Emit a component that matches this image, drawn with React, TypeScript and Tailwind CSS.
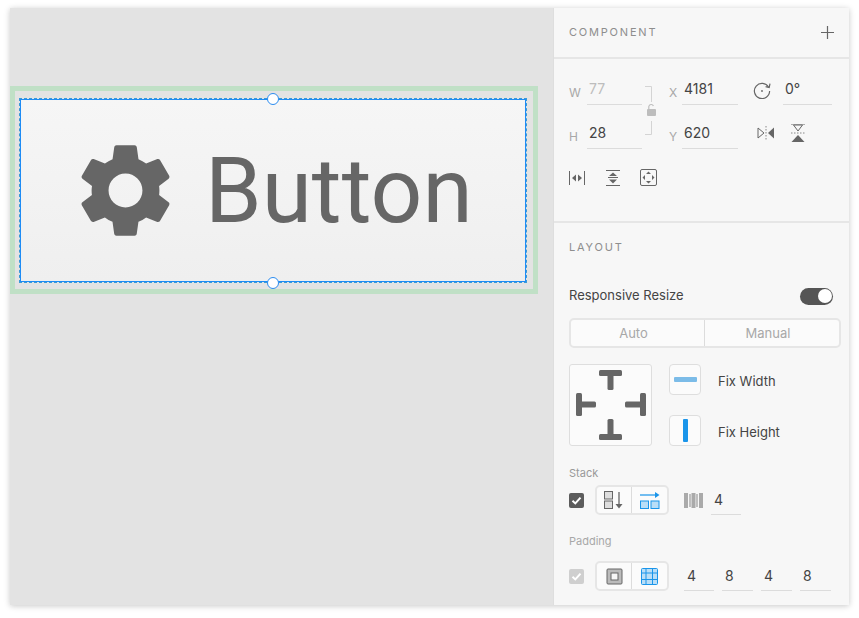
const FONT = "font-['Inter','Liberation_Sans',sans-serif]";

function Field({ label, value, labelW = 18, w, muted = false }: { label?: string; value: string; labelW?: number; w: number; muted?: boolean }) {
  return (
    <div className="flex items-end">
      {label && (
        <span className="text-[12px] leading-[16px] text-[#a8a8a8] pb-[4px]" style={{ width: labelW }}>
          {label}
        </span>
      )}
      <div
        className={`h-[32px] border-b border-[#dcdcdc] pl-[2px] text-[14px] leading-[20px] pt-[6px] ${muted ? "text-[#bdbdbd]" : "text-[#444]"}`}
        style={{ width: w }}
      >
        {value}
      </div>
    </div>
  );
}

function Underlined({ value, w }: { value: string; w: number }) {
  return (
    <div className="h-[28px] border-b border-[#dcdcdc] pl-[3px] text-[14px] leading-[26px] text-[#444]" style={{ width: w }}>
      {value}
    </div>
  );
}

function Check({ on }: { on: boolean }) {
  return (
    <div className={`w-[15px] h-[15px] rounded-[2px] flex items-center justify-center ${on ? "bg-[#5c5c5c]" : "bg-[#cfcfcf]"}`}>
      <svg width="11" height="11" viewBox="0 0 11 11" fill="none">
        <path d="M1.5 5.8 L4.3 8.4 L9.5 2.6" stroke="#fff" strokeWidth="2" />
      </svg>
    </div>
  );
}

function Seg({ left, right }: { left: React.ReactNode; right: React.ReactNode }) {
  return (
    <div className="flex w-[74px] h-[30px] border-2 border-[#e6e6e6] rounded-[5px] bg-[#fbfbfb]">
      <div className="w-[35px] border-r border-[#dcdcdc] flex items-center justify-center">{left}</div>
      <div className="flex-1 flex items-center justify-center">{right}</div>
    </div>
  );
}

function ResizeIcon() {
  return (
    <svg width="70" height="70" viewBox="0 0 70 70" fill="#666">
      <rect x="23" y="0" width="23" height="6" rx="1.5" />
      <rect x="31.5" y="0" width="6" height="20" rx="1.5" />
      <rect x="23" y="64" width="23" height="6" rx="1.5" />
      <rect x="31.5" y="49" width="6" height="21" rx="1.5" />
      <rect x="0" y="23" width="6" height="23" rx="1.5" />
      <rect x="0" y="31.5" width="20" height="6" rx="1.5" />
      <rect x="64" y="23" width="6" height="23" rx="1.5" />
      <rect x="49" y="31.5" width="21" height="6" rx="1.5" />
    </svg>
  );
}

export default function App() {
  return (
    <div className={`w-[859px] h-[618px] bg-white pl-[10px] pt-[8px] ${FONT}`}>
      <div className="flex w-[839px] h-[597px] shadow-[0_1px_6px_rgba(0,0,0,0.22)] bg-[#e3e3e3]">
        {/* canvas */}
        <div className="relative w-[544px] border-r border-[#dedede]">
          <div className="absolute left-[0px] top-[78px] w-[528px] h-[208px] border-[5px] border-[#c0e0c6]" />
          <div className="absolute left-[10px] top-[91px] w-[506px] h-[183px] border border-[#1e8cf5] outline-1 outline-dashed outline-[#3a9ad8] bg-gradient-to-b from-[#f6f6f6] to-[#efefef] flex items-center pl-[48px]">
            <svg width="113" height="113" viewBox="0 0 24 24" fill="#666">
              <path d="M19.14 12.94c.04-.3.06-.61.06-.94 0-.32-.02-.64-.07-.94l2.03-1.58c.18-.14.23-.41.12-.61l-1.92-3.32c-.12-.22-.37-.29-.59-.22l-2.39.96c-.5-.38-1.03-.7-1.62-.94l-.36-2.54c-.04-.24-.24-.41-.48-.41h-3.84c-.24 0-.43.17-.47.41l-.36 2.54c-.59.24-1.13.57-1.62.94l-2.39-.96c-.22-.08-.47 0-.59.22L2.74 8.87c-.12.21-.08.47.12.61l2.03 1.58c-.05.3-.09.63-.09.94s.02.64.07.94l-2.03 1.58c-.18.14-.23.41-.12.61l1.92 3.32c.12.22.37.29.59.22l2.39-.96c.5.38 1.03.7 1.62.94l.36 2.54c.05.24.24.41.48.41h3.84c.24 0 .44-.17.47-.41l.36-2.54c.59-.24 1.13-.56 1.62-.94l2.39.96c.22.08.47 0 .59-.22l1.92-3.32c.12-.22.07-.47-.12-.61l-2.01-1.58zM12 15.6c-1.98 0-3.6-1.62-3.6-3.6s1.62-3.6 3.6-3.6 3.6 1.62 3.6 3.6-1.62 3.6-3.6 3.6z" />
            </svg>
            <span className="ml-[23px] mt-[1px] font-['Roboto',sans-serif] text-[91px] leading-none text-[#666]">Button</span>
          </div>
          <div className="absolute left-[257px] top-[85px] w-[12px] h-[12px] rounded-full bg-white border border-[#2b8cf0]" />
          <div className="absolute left-[257px] top-[269px] w-[12px] h-[12px] rounded-full bg-white border border-[#2b8cf0]" />
        </div>

        {/* inspector */}
        <div className="flex-1 bg-[#f7f7f7] flex flex-col">
          <div className="h-[51px] border-b-2 border-[#e6e6e6] flex items-center justify-between pl-[15px] pr-[15px]">
            <span className="text-[11px] tracking-[1.8px] text-[#8e8e8e]">COMPONENT</span>
            <svg width="13" height="13" viewBox="0 0 13 13" stroke="#666" strokeWidth="1.2">
              <path d="M6.5 0 V13 M0 6.5 H13" />
            </svg>
          </div>

          <div className="relative h-[164px] border-b-2 border-[#e6e6e6] pl-[15px] pt-[14px]">
            <div className="flex items-end">
              <Field label="W" value="77" w={55} muted />
              <div className="w-[27px]" />
              <Field label="X" value="4181" labelW={13} w={56} />
              <div className="w-[15px]" />
              <svg width="18" height="18" viewBox="0 0 18 18" fill="none" stroke="#666" strokeWidth="1.2" className="mb-[6px]">
                <path d="M15.6 6.2 A7.6 7.6 0 1 0 16.6 10" />
                <path d="M12.6 5.6 L16.2 6.6 L17 2.6" />
                <circle cx="9" cy="10" r="0.9" fill="#666" stroke="none" />
              </svg>
              <div className="w-[12px]" />
              <Field value="0°" w={49} />
            </div>
            <div className="flex items-end mt-[12px]">
              <Field label="H" value="28" w={55} />
              <div className="w-[27px]" />
              <Field label="Y" value="620" labelW={13} w={56} />
              <div className="w-[19px]" />
              <svg width="18" height="14" viewBox="0 0 18 14" className="mb-[9px]">
                <path d="M1 2 L7 7 L1 12 Z" fill="none" stroke="#666" strokeWidth="1" />
                <path d="M17 1.5 L11 7 L17 12.5 Z" fill="#666" />
                <path d="M9 0 V14" stroke="#888" strokeWidth="1" strokeDasharray="1.5 1.5" />
              </svg>
              <div className="w-[16px]" />
              <svg width="14" height="18" viewBox="0 0 14 18" className="mb-[7px]">
                <path d="M0 0 H14 M2.5 1 L7 7 L11.5 1 Z" fill="none" stroke="#666" strokeWidth="1" />
                <path d="M0 9 H14" stroke="#888" strokeWidth="1" strokeDasharray="1.5 1.5" />
                <path d="M7 11 L13.5 18 H0.5 Z" fill="#666" />
              </svg>
            </div>
            {/* lock bracket sits between W and H */}
            <svg width="11" height="50" viewBox="0 0 11 50" fill="none" className="absolute left-[91px] top-[27px]">
              <path d="M0 .5 H6.5 V16 M6.5 35 V48.5 H0" stroke="#d4d4d4" />
              <rect x="2" y="23" width="9" height="7" rx="1" fill="#bdbdbd" />
              <path d="M3.8 23 V20.5 A2.4 2.4 0 0 1 8.4 20" stroke="#bdbdbd" strokeWidth="1.2" />
            </svg>
            <div className="flex items-center gap-[18px] mt-[20px]">
              <svg width="16" height="14" viewBox="0 0 16 14">
                <path d="M.5 0 V14 M15.5 0 V14" stroke="#666" />
                <path d="M7 3.5 L3 7 L7 10.5 Z M9 3.5 L13 7 L9 10.5 Z" fill="#666" />
              </svg>
              <svg width="16" height="16" viewBox="0 0 16 16" className="ml-[2px]">
                <path d="M1 .5 H15 M1 15.5 H15 M3 7.5 H13" stroke="#666" />
                <path d="M8 2.5 L12 6 H4 Z M8 13.5 L12 9.5 H4 Z" fill="#666" />
              </svg>
              <svg width="17" height="17" viewBox="0 0 17 17" className="ml-[1px]">
                <rect x=".5" y=".5" width="16" height="16" rx="1.5" fill="none" stroke="#666" />
                <path d="M8.5 2.5 L11 5 H6 Z M8.5 14.5 L11 12 H6 Z M2.5 8.5 L5 6 V11 Z M14.5 8.5 L12 6 V11 Z" fill="#666" />
              </svg>
            </div>
          </div>

          <div className="flex-1 pl-[15px] pr-[8px]">
            <div className="text-[11px] tracking-[1.8px] leading-[14px] text-[#8e8e8e] pt-[17px]">LAYOUT</div>
            <div className="flex items-center justify-between pr-[8px] mt-[32px] h-[20px]">
              <span className="text-[13px] text-[#444]">Responsive Resize</span>
              <div className="w-[33px] h-[17px] rounded-full bg-[#555] flex items-center justify-end pr-[1px]">
                <div className="w-[14px] h-[14px] rounded-full bg-white" />
              </div>
            </div>
            <div className="flex h-[30px] mt-[12px] w-[272px] border-2 border-[#e6e6e6] rounded-[5px] bg-[#fbfbfb] text-[13px] text-[#a8a8a8]">
              <div className="w-[134px] border-r border-[#dcdcdc] flex items-center justify-center pr-[8px] pt-[2px]">Auto</div>
              <div className="flex-1 flex items-center justify-center pr-[8px] pt-[2px]">Manual</div>
            </div>
            <div className="flex mt-[16px]">
              <div className="w-[83px] h-[82px] border border-[#dedede] rounded-[3px] bg-[#fbfbfb] flex items-center justify-center">
                <ResizeIcon />
              </div>
              <div className="ml-[17px] flex flex-col gap-[20px]">
                <div className="flex items-center">
                  <div className="w-[32px] h-[31px] border border-[#dedede] rounded-[4px] bg-[#fbfbfb] flex items-center justify-center">
                    <div className="w-[23px] h-[5px] rounded-[1px] bg-[#7cbce8]" />
                  </div>
                  <span className="ml-[17px] mt-[5px] text-[13px] text-[#444]">Fix Width</span>
                </div>
                <div className="flex items-center">
                  <div className="w-[32px] h-[31px] border border-[#dedede] rounded-[4px] bg-[#fbfbfb] flex items-center justify-center">
                    <div className="w-[5px] h-[23px] rounded-[1px] bg-[#1a95ea]" />
                  </div>
                  <span className="ml-[17px] mt-[5px] text-[13px] text-[#444]">Fix Height</span>
                </div>
              </div>
            </div>

            <div className="text-[11px] leading-[14px] text-[#999] mt-[20px]">Stack</div>
            <div className="flex items-center mt-[5px] h-[30px]">
              <Check on />
              <div className="ml-[11px]">
                <Seg
                  left={
                    <svg width="20" height="18" viewBox="0 0 20 18" fill="none">
                      <rect x=".5" y=".5" width="8" height="7.5" fill="#ddd" stroke="#666" />
                      <rect x=".5" y="10" width="8" height="7.5" fill="#ddd" stroke="#666" />
                      <path d="M15 1 V14" stroke="#666" strokeWidth="1.3" />
                      <path d="M11.5 13 H18.5 L15 17.5 Z" fill="#666" />
                    </svg>
                  }
                  right={
                    <svg width="20" height="17" viewBox="0 0 20 17" fill="none">
                      <path d="M0 3 H16" stroke="#1a95ea" strokeWidth="1.2" />
                      <path d="M15 0 L19.5 3 L15 6 Z" fill="#1a95ea" />
                      <rect x=".5" y="9" width="8" height="7.5" fill="#b9def7" stroke="#1a95ea" />
                      <rect x="11" y="9" width="8" height="7.5" fill="#b9def7" stroke="#1a95ea" />
                    </svg>
                  }
                />
              </div>
              <svg width="19" height="15" viewBox="0 0 19 15" className="ml-[15px]" fill="#aaa">
                <rect x="0" y="0" width="4" height="15" />
                <rect x="15" y="0" width="4" height="15" />
                <rect x="7.5" y="0" width="4" height="15" />
                <rect x="5.5" y="1" width="1" height="13" fill="#888" />
                <rect x="12.5" y="1" width="1" height="13" fill="#888" />
              </svg>
              <div className="ml-[8px] self-end">
                <Underlined value="4" w={30} />
              </div>
            </div>

            <div className="text-[11px] leading-[14px] text-[#a8a8a8] mt-[19px]">Padding</div>
            <div className="flex items-center mt-[13px] h-[30px]">
              <Check on={false} />
              <div className="ml-[11px]">
                <Seg
                  left={
                    <svg width="17" height="17" viewBox="0 0 17 17" fill="none">
                      <rect x="1" y="1" width="15" height="15" rx="1" fill="#bbb" stroke="#666" />
                      <rect x="5" y="5" width="7" height="7" fill="#f7f7f7" stroke="#666" />
                    </svg>
                  }
                  right={
                    <svg width="17" height="17" viewBox="0 0 17 17" fill="none">
                      <rect x=".5" y=".5" width="16" height="16" rx="1" fill="#b9def7" stroke="#1a95ea" />
                      <path d="M5 0 V17 M11.5 0 V17 M0 5 H17 M0 11.5 H17" stroke="#1a95ea" />
                    </svg>
                  }
                />
              </div>
              <div className="ml-[15px] flex gap-[8px] self-end">
                <Underlined value="4" w={30} />
                <Underlined value="8" w={31} />
                <Underlined value="4" w={31} />
                <Underlined value="8" w={31} />
              </div>
            </div>
          </div>
        </div>
      </div>
    </div>
  );
}
